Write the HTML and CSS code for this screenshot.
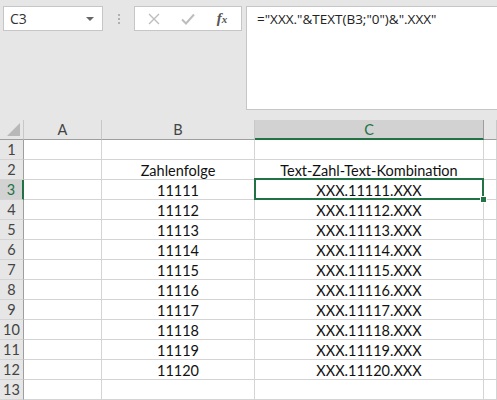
FILE: index.html
```html
<!DOCTYPE html>
<html lang="de">
<head>
  <meta charset="UTF-8">
  <title>Text-Zahl-Text-Kombination</title>
  <link rel="stylesheet" href="styles.css">
</head>
<body>
  <!-- Formula bar area -->
  <div class="topbar">
    <div class="namebox">
      <span>C3</span>
      <span class="arrow"></span>
    </div>
    <div class="grip"><i></i><i></i><i></i></div>
    <div class="fnbox">
      <span class="fn-btn cancel">
        <svg width="12" height="12" viewBox="0 0 12 12"><path d="M1 1 L11 11 M11 1 L1 11" fill="none" stroke="#bdbdbd" stroke-width="1.4"/></svg>
      </span>
      <span class="fn-btn enter">
        <svg width="14" height="12" viewBox="0 0 14 12"><path d="M1 6.5 L5 10.5 L13 1.5" fill="none" stroke="#bdbdbd" stroke-width="2"/></svg>
      </span>
      <span class="fn-btn fx">f<small>x</small></span>
    </div>
    <div class="formula">="XXX."&amp;TEXT(B3;"0")&amp;".XXX"</div>
  </div>

  <!-- Sheet grid -->
  <div class="sheet">
    <div class="corner"><span class="tri"></span></div>
    <div class="colhead">A</div>
    <div class="colhead">B</div>
    <div class="colhead active">C</div>
    <div class="colhead"></div>

    <div class="rowhead">1</div><div class="cell"></div><div class="cell"></div><div class="cell"></div><div class="cell"></div>
    <div class="rowhead">2</div><div class="cell"></div><div class="cell">Zahlenfolge</div><div class="cell">Text-Zahl-Text-Kombination</div><div class="cell"></div>
    <div class="rowhead active">3</div><div class="cell"></div><div class="cell">11111</div><div class="cell selected">XXX.11111.XXX<span class="handle"></span></div><div class="cell"></div>
    <div class="rowhead">4</div><div class="cell"></div><div class="cell">11112</div><div class="cell">XXX.11112.XXX</div><div class="cell"></div>
    <div class="rowhead">5</div><div class="cell"></div><div class="cell">11113</div><div class="cell">XXX.11113.XXX</div><div class="cell"></div>
    <div class="rowhead">6</div><div class="cell"></div><div class="cell">11114</div><div class="cell">XXX.11114.XXX</div><div class="cell"></div>
    <div class="rowhead">7</div><div class="cell"></div><div class="cell">11115</div><div class="cell">XXX.11115.XXX</div><div class="cell"></div>
    <div class="rowhead">8</div><div class="cell"></div><div class="cell">11116</div><div class="cell">XXX.11116.XXX</div><div class="cell"></div>
    <div class="rowhead">9</div><div class="cell"></div><div class="cell">11117</div><div class="cell">XXX.11117.XXX</div><div class="cell"></div>
    <div class="rowhead">10</div><div class="cell"></div><div class="cell">11118</div><div class="cell">XXX.11118.XXX</div><div class="cell"></div>
    <div class="rowhead">11</div><div class="cell"></div><div class="cell">11119</div><div class="cell">XXX.11119.XXX</div><div class="cell"></div>
    <div class="rowhead">12</div><div class="cell"></div><div class="cell">11120</div><div class="cell">XXX.11120.XXX</div><div class="cell"></div>
    <div class="rowhead">13</div><div class="cell"></div><div class="cell"></div><div class="cell"></div><div class="cell"></div>
  </div>
</body>
</html>
```

FILE: styles.css
```css
/* General */
body {
  margin: 0;
  background: #e6e6e6;
  font-family: 'Open Sans', sans-serif;
  color: #222;
  overflow: hidden;
}

/* Formula bar */
.topbar {
  display: flex;
  align-items: flex-start;
  height: 120px;
  padding: 6px 0 0 3px;
  box-sizing: border-box;
}

.namebox {
  width: 100px;
  height: 25px;
  box-sizing: border-box;
  background: #fff;
  border: 1px solid #c6c6c6;
  display: flex;
  align-items: center;
  justify-content: space-between;
  padding: 0 6px 0 6px;
  font-size: 14px;
  color: #333;
}

.arrow {
  width: 0;
  height: 0;
  border-left: 4px solid transparent;
  border-right: 4px solid transparent;
  border-top: 4px solid #666;
  margin-right: 2px;
}

.grip {
  width: 31px;
  height: 25px;
  display: flex;
  flex-direction: column;
  align-items: center;
  justify-content: center;
  gap: 2px;
}

.grip i {
  width: 2px;
  height: 2px;
  background: #b0b0b0;
}

.fnbox {
  width: 108px;
  height: 25px;
  box-sizing: border-box;
  background: #fff;
  border: 1px solid #c6c6c6;
  display: flex;
  align-items: center;
  justify-content: space-around;
  padding: 0 2px;
}

.fn-btn {
  width: 30px;
  text-align: center;
  color: #bdbdbd;
  font-size: 14px;
  line-height: 1;
}

.fn-btn svg {
  display: block;
  margin: 0 auto;
}

.fx {
  font-family: 'Liberation Serif', serif;
  font-style: italic;
  font-weight: bold;
  color: #555;
  font-size: 15px;
}

.fx small {
  font-size: 11px;
}

.formula {
  flex: 1;
  margin-left: 4px;
  height: 104px;
  box-sizing: border-box;
  background: #fff;
  border: 1px solid #c6c6c6;
  border-right: none;
  padding: 3px 0 0 10px;
  font-size: 13.5px;
  color: #222;
  white-space: nowrap;
}

/* Sheet */
.sheet {
  display: grid;
  grid-template-columns: 24px 78px 153px 229px 1fr;
  grid-auto-rows: 20px;
  background: #fff;
  font-family: 'Lato', sans-serif;
  font-size: 14.5px;
}

.sheet > div {
  box-sizing: border-box;
  display: flex;
  align-items: center;
  justify-content: center;
}

.corner {
  background: #e6e6e6;
  border-right: 1px solid #c8c8c8;
  border-bottom: 1px solid #9e9e9e;
  position: relative;
}

.tri {
  position: absolute;
  right: 3px;
  bottom: 3px;
  width: 0;
  height: 0;
  border-left: 13px solid transparent;
  border-bottom: 13px solid #b8b8b8;
}

.colhead {
  background: #e6e6e6;
  border-right: 1px solid #c8c8c8;
  border-bottom: 1px solid #9e9e9e;
  color: #444;
}

.colhead.active {
  background: #d2d2d2;
  border-bottom: 2px solid #217346;
  border-right-color: #9e9e9e;
  color: #217346;
}

.rowhead {
  background: #e6e6e6;
  border-right: 1px solid #9e9e9e;
  border-bottom: 1px solid #d4d4d4;
  color: #444;
}

.rowhead.active {
  background: #d2d2d2;
  border-right: 2px solid #217346;
  color: #217346;
}

.cell {
  border-right: 1px solid #d4d4d4;
  border-bottom: 1px solid #d4d4d4;
  color: #111;
  white-space: nowrap;
  padding-top: 2px;
}

/* Selected cell outline */
.cell.selected {
  position: relative;
}

.cell.selected::after {
  content: '';
  position: absolute;
  top: -2px;
  left: -1px;
  right: -1px;
  bottom: -1px;
  border: 2px solid #217346;
}

.handle {
  position: absolute;
  right: -4px;
  bottom: -4px;
  width: 5px;
  height: 5px;
  background: #217346;
  border: 1px solid #fff;
  z-index: 1;
}
```
